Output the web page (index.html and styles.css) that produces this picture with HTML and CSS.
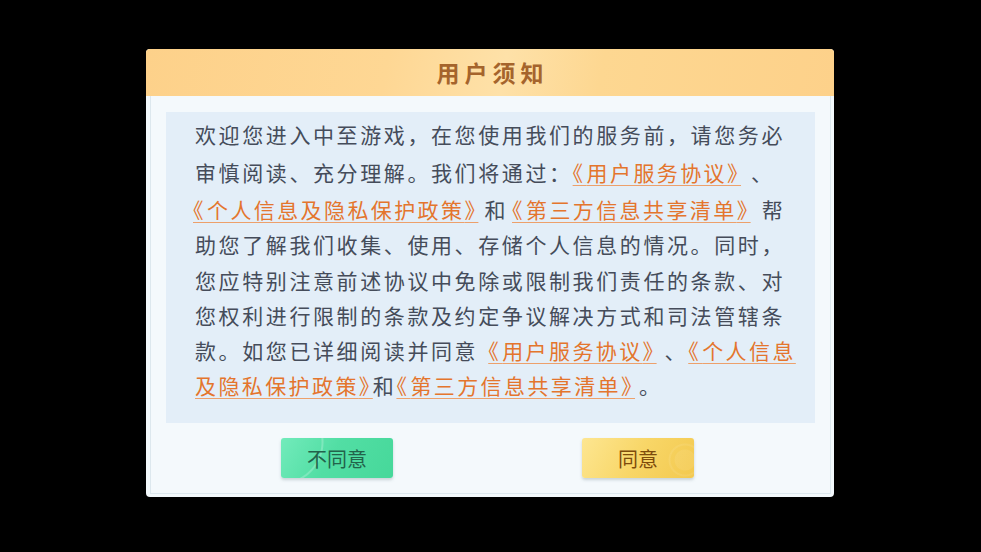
FILE: index.html
```html
<!DOCTYPE html>
<html lang="zh-CN">
<head>
<meta charset="utf-8">
<title>用户须知</title>
<link rel="stylesheet" href="styles.css">
</head>
<body>
<div class="stage">
  <div class="dialog">
    <div class="dialog-header"><h1 class="dialog-title">用户须知</h1></div>
    <div class="dialog-body">
      <div class="notice">
        <p class="notice-text">
          <span class="ln ln-1">欢迎您进入中至游戏，在您使用我们的服务前，请您务必</span>
          <span class="ln ln-2">审慎阅读、充分理解。我们将通过：<a class="link link-a"><span class="br">《</span>用户服务协议<span class="br">》</span></a>、</span>
          <span class="ln"><a class="link link-b"><span class="br">《</span>个人信息及隐私保护政策<span class="br">》</span></a>和<a class="link link-c"><span class="br">《</span>第三方信息共享清单<span class="br">》</span></a>帮</span>
          <span class="ln">助您了解我们收集、使用、存储个人信息的情况。同时，</span>
          <span class="ln">您应特别注意前述协议中免除或限制我们责任的条款、对</span>
          <span class="ln">您权利进行限制的条款及约定争议解决方式和司法管辖条</span>
          <span class="ln">款。如您已详细阅读并同意<a class="link link-d"><span class="br">《</span>用户服务协议<span class="br">》</span></a>、<a class="link link-e"><span class="br">《</span>个人信息</a></span>
          <span class="ln"><a class="link link-f">及隐私保护政策<span class="br">》</span></a>和<a class="link link-g"><span class="br">《</span>第三方信息共享清单<span class="br">》</span></a>。</span>
        </p>
      </div>
      <div class="actions">
        <button class="btn btn-decline">不同意</button>
        <button class="btn btn-accept">同意</button>
      </div>
    </div>
  </div>
</div>
</body>
</html>
```

FILE: styles.css
```css
html, body {
  margin: 0;
  padding: 0;
  background: #000;
}
body {
  width: 981px;
  height: 552px;
  overflow: hidden;
  font-family: "Noto Sans CJK SC", "Noto Sans", sans-serif;
}
.stage {
  display: flex;
  justify-content: center;
  padding-top: 49px;
}
.dialog {
  width: 688px;
  height: 448px;
  margin-left: -1px;
  border-radius: 4px;
  overflow: hidden;
  background: #f3f9fc;
  display: flex;
  flex-direction: column;
}
.dialog-header {
  height: 47px;
  flex: none;
  background: linear-gradient(100deg, #fdd18a 0%, #fed794 35%, #fee1a8 52%, #fdd791 66%, #fdd18a 100%);
  display: flex;
  align-items: center;
  justify-content: center;
}
.dialog-title {
  margin: 0;
  font-size: 23px;
  font-weight: bold;
  letter-spacing: 5px;
  padding-left: 5px;
  color: #a5642c;
  line-height: 1;
}
.dialog-body {
  flex: 1;
  margin: 0 3px 3px 4px;
  border-left: 1px solid #dde8ee;
  border-right: 1px solid #dde8ee;
  border-bottom: 1px solid #dde8ee;
  background: #f4f9fc;
  display: flex;
  flex-direction: column;
  padding: 16px 15px 0 15px;
}
.notice {
  height: 311px;
  background: #e3eef8;
  box-sizing: border-box;
  padding: 3px 0 0 29px;
}
.notice-text {
  margin: 0;
  font-size: 21px;
  font-weight: 400;
  letter-spacing: 2.6px;
  color: #454c5a;
  white-space: nowrap;
}
.ln {
  display: block;
  height: 35.3px;
  line-height: 35.3px;
}
.ln-1 { height: 38px; line-height: 38px; }
.ln-2 { height: 39px; line-height: 39px; }
.link {
  color: #e4752d;
  letter-spacing: 2.4px;
  text-decoration: underline;
  text-decoration-color: #eda06b;
  text-decoration-thickness: 1px;
  text-underline-offset: 4px;
}
.br {
  font-feature-settings: "halt" 1;
  letter-spacing: 3.5px;
}
.link-a { margin: 0 10px 0 0; }
.link-b { margin: 0 6px 0 -2px; }
.link-c { margin: 0 11px 0 4px; }
.link-d { margin: 0 8px 0 10px; }
.link-e { margin: 0; }
.link-f { margin: 0; }
.link-g { margin: 0 4px 0 0; }
.actions {
  display: flex;
  justify-content: space-between;
  padding: 15px 121px 0 115px;
}
.btn {
  width: 112px;
  height: 40px;
  border: none;
  border-radius: 3px;
  font-family: "Noto Sans CJK SC", "Noto Sans", sans-serif;
  font-size: 20px;
  cursor: pointer;
  box-shadow: 0 2px 3px rgba(120, 140, 150, 0.35);
}
.btn-decline {
  background:
    radial-gradient(circle at 0% 10%, transparent 0 40px, rgba(255, 255, 255, 0.22) 41px 42px, transparent 43px),
    linear-gradient(120deg, #72ebbb 0%, #52dea4 45%, #46d89a 100%);
  color: #23634b;
}
.btn-accept {
  background:
    radial-gradient(circle at 92% 55%, rgba(255, 255, 255, 0.08) 0 10px, transparent 11px 14px, rgba(255, 255, 255, 0.08) 15px 16px, transparent 17px),
    linear-gradient(120deg, #fde691 0%, #f8d667 50%, #f3c94f 100%);
  color: #7e4b0c;
}
```
